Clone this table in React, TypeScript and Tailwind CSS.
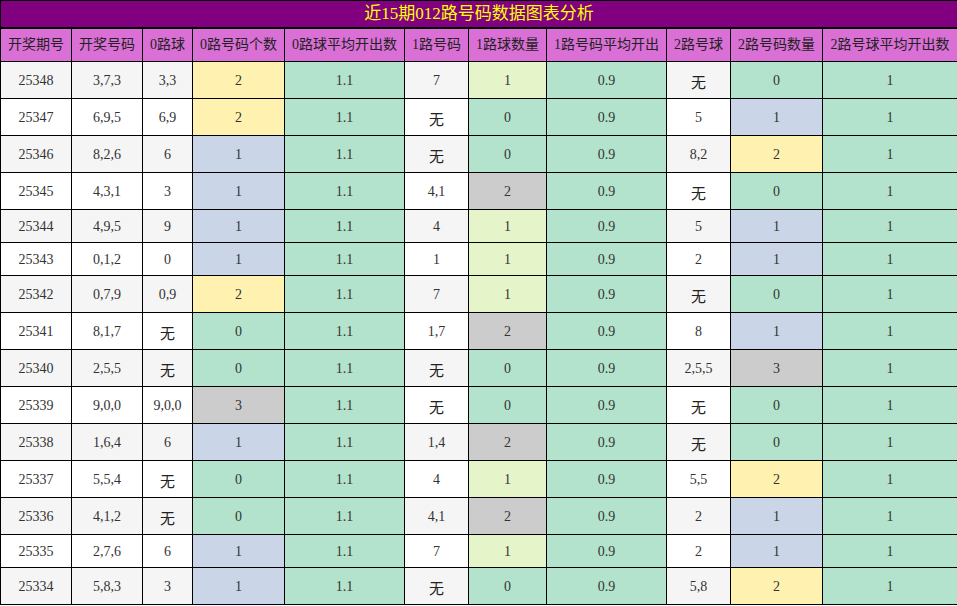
const font = "font-['Liberation_Serif','Noto_Sans_CJK_SC',serif]";

type Tone = 'y' | 'g' | 'b' | 'l' | 'x';

const tone: Record<Tone, string> = {
  y: 'bg-[#fff2b0]',
  g: 'bg-[#b3e3cc]',
  b: 'bg-[#cbd5e8]',
  l: 'bg-[#e6f5c9]',
  x: 'bg-[#cccccc]',
};

const headers = [
  '开奖期号',
  '开奖号码',
  '0路球',
  '0路号码个数',
  '0路球平均开出数',
  '1路号码',
  '1路球数量',
  '1路号码平均开出',
  '2路号球',
  '2路号码数量',
  '2路号球平均开出数',
];

const widths = [71, 71, 50, 92, 120, 64, 78, 120, 64, 92, 135];

// 期号, 开奖号码, 0路, 0路个数, 1路, 1路个数, 2路, 2路个数
const rows: [string, string, string, [string, Tone], string, [string, Tone], string, [string, Tone]][] = [
  ['25348', '3,7,3', '3,3', ['2', 'y'], '7', ['1', 'l'], '无', ['0', 'g']],
  ['25347', '6,9,5', '6,9', ['2', 'y'], '无', ['0', 'g'], '5', ['1', 'b']],
  ['25346', '8,2,6', '6', ['1', 'b'], '无', ['0', 'g'], '8,2', ['2', 'y']],
  ['25345', '4,3,1', '3', ['1', 'b'], '4,1', ['2', 'x'], '无', ['0', 'g']],
  ['25344', '4,9,5', '9', ['1', 'b'], '4', ['1', 'l'], '5', ['1', 'b']],
  ['25343', '0,1,2', '0', ['1', 'b'], '1', ['1', 'l'], '2', ['1', 'b']],
  ['25342', '0,7,9', '0,9', ['2', 'y'], '7', ['1', 'l'], '无', ['0', 'g']],
  ['25341', '8,1,7', '无', ['0', 'g'], '1,7', ['2', 'x'], '8', ['1', 'b']],
  ['25340', '2,5,5', '无', ['0', 'g'], '无', ['0', 'g'], '2,5,5', ['3', 'x']],
  ['25339', '9,0,0', '9,0,0', ['3', 'x'], '无', ['0', 'g'], '无', ['0', 'g']],
  ['25338', '1,6,4', '6', ['1', 'b'], '1,4', ['2', 'x'], '无', ['0', 'g']],
  ['25337', '5,5,4', '无', ['0', 'g'], '4', ['1', 'l'], '5,5', ['2', 'y']],
  ['25336', '4,1,2', '无', ['0', 'g'], '4,1', ['2', 'x'], '2', ['1', 'b']],
  ['25335', '2,7,6', '6', ['1', 'b'], '7', ['1', 'l'], '2', ['1', 'b']],
  ['25334', '5,8,3', '3', ['1', 'b'], '无', ['0', 'g'], '5,8', ['2', 'y']],
];

function Val({ v }: { v: string }) {
  // “无”字号略大，位置偏下
  if (v === '无')
    return (
      <span className="relative top-[3px] text-[15px] leading-[20px] text-[#222]">无</span>
    );
  return <>{v}</>;
}

export default function App() {
  return (
    <div className={`w-[957px] ${font} text-[#333] text-[14px]`}>
      <table className="w-[957px] table-fixed border-collapse text-center">
        <colgroup>
          {widths.map((w, i) => (
            <col key={i} style={{ width: w }} />
          ))}
        </colgroup>
        <thead>
          <tr>
            <th
              colSpan={11}
              className="h-[27px] p-0 border border-black border-b-2 bg-[#800080] text-[#ffff00] text-[17px] font-normal leading-[24px]"
            >
              近15期012路号码数据图表分析
            </th>
          </tr>
          <tr>
            {headers.map((h) => (
              <th
                key={h}
                className="h-[34px] p-0 border border-black bg-[#da70d6] text-[#222] font-normal text-[14px] whitespace-nowrap"
              >
                {h}
              </th>
            ))}
          </tr>
        </thead>
        <tbody>
          {rows.map((r, i) => {
            const stripe = i % 2 === 0 ? 'bg-[#f5f5f5]' : 'bg-white';
            const tall = r.includes('无');
            const cell = `p-0 border border-black ${tall ? 'h-[37px]' : 'h-[33px]'}`;
            return (
              <tr key={r[0]}>
                <td className={`${cell} ${stripe}`}>{r[0]}</td>
                <td className={`${cell} ${stripe}`}>{r[1]}</td>
                <td className={`${cell} ${stripe}`}>
                  <Val v={r[2]} />
                </td>
                <td className={`${cell} ${tone[r[3][1]]}`}>{r[3][0]}</td>
                <td className={`${cell} ${tone.g}`}>1.1</td>
                <td className={`${cell} ${stripe}`}>
                  <Val v={r[4]} />
                </td>
                <td className={`${cell} ${tone[r[5][1]]}`}>{r[5][0]}</td>
                <td className={`${cell} ${tone.g}`}>0.9</td>
                <td className={`${cell} ${stripe}`}>
                  <Val v={r[6]} />
                </td>
                <td className={`${cell} ${tone[r[7][1]]}`}>{r[7][0]}</td>
                <td className={`${cell} ${tone.g}`}>1</td>
              </tr>
            );
          })}
        </tbody>
      </table>
    </div>
  );
}
